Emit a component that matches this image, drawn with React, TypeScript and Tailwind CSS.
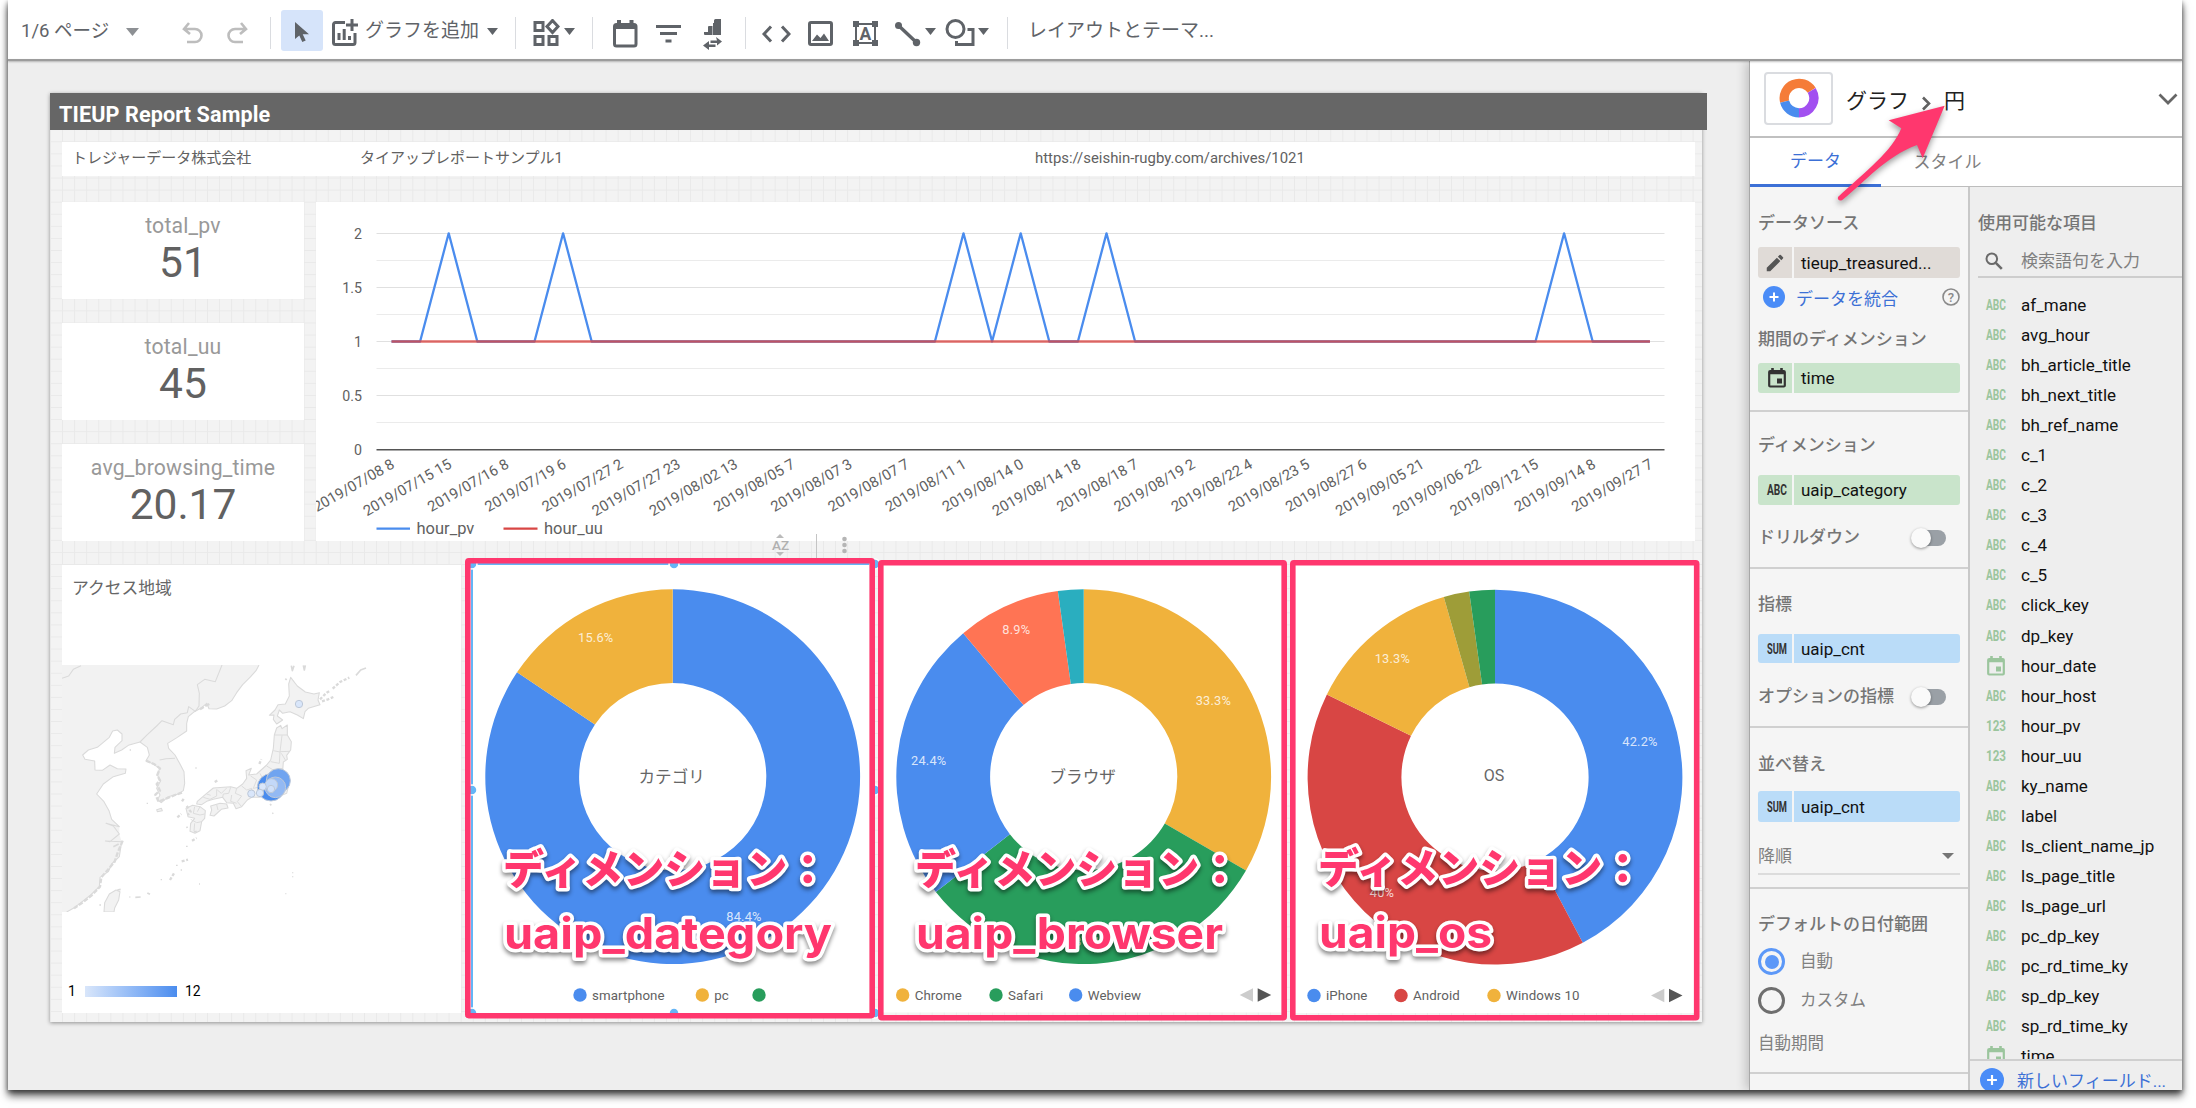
import React from 'react';

const PINK = '#ff376e';
const BLUE = '#4a8cee';
const YELLOW = '#f0b23c';
const GREEN = '#289d5c';
const RED = '#d84644';

/* ---------- toolbar ---------- */

const Caret = ({ className = '' }: { className?: string }) => (
  <svg className={'shrink-0 ' + className} width="11" height="7" viewBox="0 0 11 7">
    <path d="M0 0h11L5.5 7z" fill="currentColor" />
  </svg>
);

const Divider = ({ className = '' }: { className?: string }) => (
  <div className={'h-8 w-px shrink-0 bg-[#dadce0] ' + className} />
);

type IconProps = { w: number; h: number; className?: string; children: React.ReactNode };
const Icon = ({ w, h, className = '', children }: IconProps) => (
  <svg
    className={'shrink-0 ' + className}
    width={w}
    height={h}
    viewBox={`0 0 ${w} ${h}`}
    fill="none"
    stroke="currentColor"
    strokeWidth="3"
  >
    {children}
  </svg>
);

function Toolbar() {
  return (
    <div className="flex h-[59px] items-center bg-white text-[#5f6368]">
      <span className="ml-[13px] mt-0.5 w-[92px] whitespace-nowrap text-[18.5px] leading-6">1/6 ページ</span>
      <svg className="ml-[13px] mt-1 shrink-0 text-[#8d9094]" width="13" height="8" viewBox="0 0 13 8">
        <path d="M0 0h13L6.500 8z" fill="currentColor" />
      </svg>
      <Icon w={22} h={22} className="ml-[43px] mt-1.5 text-[#bdbdbd]">
        <path d="M7 1 2 7l6 5M2 7h11a6.500 6.500 0 0 1 0 13H5" strokeWidth="2.600" />
      </Icon>
      <Icon w={22} h={22} className="ml-[22px] mt-1.5 text-[#bdbdbd]">
        <path d="m15 1 5 6-6 5M20 7H9a6.500 6.500 0 0 0 0 13h8" strokeWidth="2.600" />
      </Icon>
      <Divider className="ml-[22px] mt-1.5" />
      <div className="ml-[10px] mt-0.5 flex h-[41px] w-[42px] shrink-0 items-center justify-center rounded-[3px] bg-[#d6e4fa]">
        <svg width="14" height="20" viewBox="0 0 14 20" className="mt-0.5">
          <path d="M0 0v17l4.300-3.500 3 6.500 3.400-1.500-3-6.300H14z" fill="currentColor" />
        </svg>
      </div>
      <Icon w={28} h={28} className="ml-[8px] mt-1.5">
        <path d="M14 3.500H4.500a2 2 0 0 0-2 2v18a2 2 0 0 0 2 2H22a2 2 0 0 0 2-2V14M21 0v12M15 6h12" />
        <path d="M8 21v-7M13.200 21V10M18.500 21v-4" />
      </Icon>
      <span className="ml-[6px] mt-0.5 w-[118px] whitespace-nowrap text-[19px] leading-6">グラフを追加</span>
      <Caret className="ml-[4px] mt-1" />
      <Divider className="ml-[17px] mt-1.5" />
      <Icon w={27} h={28} className="ml-[17px] mt-1.5">
        <path d="M2 3.500h8v8H2zM2 17.500h8v8H2zM16 17.500h8v8h-8zM19.500 1.500l5.500 6-5.500 6-5.500-6z" />
      </Icon>
      <Caret className="ml-[4px] mt-1" />
      <Divider className="ml-[17px] mt-1.5" />
      <Icon w={25} h={28} className="ml-[20px] mt-2">
        <rect x="1.500" y="4.500" width="21.500" height="21.500" rx="2" />
        <path d="M1.500 7h21.500M6 0v5M18.500 0v5" strokeWidth="4" />
      </Icon>
      <svg className="ml-[18px] mt-2 shrink-0" width="25" height="18" viewBox="0 0 25 18">
        <path d="M0 0h25v3H0zM4 7h17v3H4zM9.500 14.500h6v3h-6z" fill="currentColor" />
      </svg>
      <svg className="ml-[22px] mt-2.5 shrink-0" width="20" height="31" viewBox="0 0 20 31" fill="currentColor">
        <path d="M1 13h4V8a1 1 0 0 1 1-1h3.500v9H2a1 1 0 0 1-1-1zM11 1.500a1.500 1.500 0 0 1 1.500-1.500H18v16h-7zM10 7V4h3v12h-3z" />
        <path d="M13 18l6 4.500-5 4V24H7.500v-2.500H14zM6 22l-6 4.500L6 31v-3h6.500v-2.500H6z" />
      </svg>
      <Divider className="ml-[22px] mt-1.5" />
      <Icon w={29} h={18} className="ml-[16px] mt-2">
        <path d="M9 1.500 2 9l7 7.500M20 1.500 27 9l-7 7.500" />
      </Icon>
      <Icon w={25} h={25} className="ml-[17px] mt-2">
        <rect x="1.500" y="1.500" width="22" height="22" rx="1.500" />
        <path d="m4 20 5-6.500 3.500 3.500 3.500-4.500 5 7.500z" fill="currentColor" stroke="none" />
      </Icon>
      <svg className="ml-[19.500px] mt-2 shrink-0" width="25" height="25" viewBox="0 0 25 25">
        <rect x="3" y="3" width="19" height="19" fill="none" stroke="currentColor" strokeWidth="2" />
        <path d="M0 0h6v6H0zM19 0h6v6h-6zM0 19h6v6H0zM19 19h6v6h-6z" fill="currentColor" />
        <text x="12.500" y="19" textAnchor="middle" fontSize="17.500" fontWeight="700" fill="currentColor">
          A
        </text>
      </svg>
      <Icon w={27} h={26} className="ml-[16px] mt-2">
        <path d="M4.500 4.500 22.500 21.500" strokeWidth="3.400" />
        <circle cx="4.500" cy="4.500" r="3.500" fill="currentColor" stroke="none" />
        <circle cx="22.500" cy="21.500" r="3.700" fill="currentColor" stroke="none" />
      </Icon>
      <Caret className="ml-[4px] mt-1" />
      <Icon w={31} h={28} className="ml-[9px] mt-1.5">
        <circle cx="10.500" cy="10" r="8.500" />
        <path d="M22.500 10.500H28v15H11.500V22" />
      </Icon>
      <Caret className="ml-[2.500px] mt-1" />
      <Divider className="ml-[18px] mt-1.5" />
      <span className="ml-[20px] mt-0.5 whitespace-nowrap text-[19px] leading-6">レイアウトとテーマ...</span>
    </div>
  );
}

/* ---------- report ---------- */

function Score({ name, value }: { name: string; value: string }) {
  return (
    <div className="flex h-[97px] w-[242px] flex-col items-center bg-white pt-[11px]">
      <span className="h-[26px] text-[21.200px] leading-[25px] tracking-[0.2px] text-[#999]">{name}</span>
      <span className="text-[42.500px] leading-[48px] text-[#616161]">{value}</span>
    </div>
  );
}

const dates = [
  '2019/07/08 8', '2019/07/15 15', '2019/07/16 8', '2019/07/19 6', '2019/07/27 2', '2019/07/27 23',
  '2019/08/02 13', '2019/08/05 7', '2019/08/07 3', '2019/08/07 7', '2019/08/11 1', '2019/08/14 0',
  '2019/08/14 18', '2019/08/18 7', '2019/08/19 2', '2019/08/22 4', '2019/08/23 5', '2019/08/27 6',
  '2019/09/05 21', '2019/09/06 22', '2019/09/12 15', '2019/09/14 8', '2019/09/27 7',
];
const peaks = [2, 6, 20, 22, 25, 41];

function LineChart() {
  const px = (k: number) => 391 + 28.6 * k;
  const pts = Array.from({ length: 45 }, (_, k) => `${px(k)},${peaks.includes(k) ? 233.3 : 341.5}`).join(' ');
  return (
    <svg className="ml-[11.5px] block bg-white" width="1379.5" height="339" viewBox="315.5 202 1379.5 339">
      {[0, 1, 2, 3, 4, 5, 6, 7].map((i) => (
        <rect key={i} x="376" width="1288" y={Math.round(233 + 27.05 * i)} height="1" fill={i % 2 ? '#ebebeb' : '#e0e0e0'} />
      ))}
      <rect x="376" y="449" width="1288" height="1.500" fill="#555" />
      <g fontSize="14.200" fill="#616161" textAnchor="end">
        {['2', '1.5', '1', '0.5', '0'].map((t, i) => (
          <text key={t} x="361.500" y={238.5 + 54.1 * i}>{t}</text>
        ))}
        {dates.map((d, i) => (
          <text key={i} transform={`translate(${395 + 57.2 * i} 467) rotate(-30)`} fontSize="14.800">
            {d}
          </text>
        ))}
      </g>
      <polyline points={pts} fill="none" stroke={BLUE} strokeWidth="2.300" strokeLinejoin="round" />
      <path d="M391 341.500H1649.500" stroke="#d84644" strokeOpacity="0.800" strokeWidth="2.600" />
      <path d="M376 528.700h33.500" stroke={BLUE} strokeWidth="2.300" />
      <path d="M503 528.700h34" stroke={RED} strokeWidth="2.300" />
      <g fontSize="16.500" fill="#616161">
        <text x="416" y="534">hour_pv</text>
        <text x="543.500" y="534">hour_uu</text>
      </g>
    </svg>
  );
}

function RegionMap() {
  return (
    <svg className="block" width="399" height="247" viewBox="6 15 1197 741">
      <g fill="#f2f2f2" stroke="#dadada" strokeWidth="3.200" strokeLinejoin="round">
        <path
          stroke="none"
          d="M6 15H597L588 32 572 50 548 74 530 98 515 122 494 138 470 147 447 146 440 130 425 143 403 155 385 170 380 190V213L352 232 323 250 326 265 345 285 360 312 372 335 374 370 370 392 352 403 325 410 304 428 292 420 300 405 290 385 302 362 292 345 299 325 281 313 258 302 268 285 262 262 240 246 205 256 185 270 163 280 165 262 186 242 186 222 172 210 158 213 148 232 112 262 85 270 68 285 75 298 104 303 105 330 127 331 150 315 172 326 198 327 196 340 160 350 130 372 110 402 132 425 147 452 155 478 178 500 178 522 185 545 178 590 155 612 145 635 120 652 118 680 92 705 60 730 40 745 20 756H6z"
        />
        <path
          fill="none"
          d="M597 15 588 32 572 50 548 74 530 98 515 122 494 138 470 147 447 146 440 130 425 143 403 155 385 170 380 190V213L352 232 323 250 326 265 345 285 360 312 372 335 374 370 370 392 352 403 325 410 304 428 292 420 300 405 290 385 302 362 292 345 299 325 281 313 258 302 268 285 262 262 240 246 205 256 185 270 163 280 165 262 186 242 186 222 172 210 158 213 148 232 112 262 85 270 68 285 75 298 104 303 105 330 127 331 150 315 172 326 198 327 196 340 160 350 130 372 110 402 132 425 147 452 155 478 178 500 138 490 160 498 178 522 150 545 136 543 185 545 178 590 155 612 145 635 120 652 118 680 92 705 60 730 40 745 20 756"
        />
        <path fill="none" d="M6 55 26 48 40 28 63 17M486 15 466 65 434 58 412 74 418 100 417 138 406 154 386 140 382 158 362 162 344 178 340 194 306 182 290 198 262 224 240 246M299 300 318 296 345 295" />
        <path fill="none" strokeWidth="7" d="M188 542 184 552 174 575 164 605 150 622 124 652 120 680 96 705 70 726 42 745M448 132 436 138 420 148M258 302 282 312 300 325 292 345 300 362 290 372 300 392 286 404 296 425 320 415 345 405 366 398" strokeDasharray="14 5" />
        <path d="M132 756 134 728 148 702 168 690 180 695 176 720 164 744 162 756z" />
        <path d="M290 449 304 445 307 452 292 455z" />
        {/* Hokkaido */}
        <path d="M692 52 712 78 736 96 762 102 778 98 774 120 780 134 745 145 735 155 730 176 712 165 690 155 668 160 658 150 652 168 668 180 650 192 640 178 642 165 628 166 645 150 654 134 676 132 688 108 686 72z" />
        {/* Honshu */}
        <path d="M650 204 662 196 666 206 682 195 682 225 694 245 692 270 680 286 682 298 670 306 668 332 690 360 680 400 650 412 632 420 618 400 600 412 575 412 562 420 545 440 528 446 520 430 500 428 488 412 460 418 440 424 425 434 410 432 412 424 440 400 460 384 512 380 530 385 548 372 560 355 558 332 574 325 566 345 590 342 620 315 632 300 640 265 643 225z" />
        <path d="M452 438 480 430 500 432 504 444 484 448 462 468 450 466 455 450z" />
        <path d="M378 445 398 436 420 440 436 452 434 475 425 485 420 512 405 520 390 514 392 490 404 475 384 470z" />
        <path fill="none" strokeWidth="2.800" d="M643 225 682 225M666 226 660 275 690 274M640 272 660 276 658 310 632 305M664 280 676 300M620 318 640 330 668 325M600 340 610 360 640 350M572 348 590 360 580 385 606 380M545 378 560 390 575 385 580 405M530 385 526 400 545 408 532 425 545 440M512 382 506 400 490 402 488 412M500 384 484 400 472 390M470 388 470 408 450 418 430 412M440 402 452 406M515 405 512 424 530 430M404 440 400 460 420 465 434 462M420 440 412 455M392 478 410 488 425 485M404 490 402 514M470 434 474 450" />
        <path fill="none" strokeWidth="7" strokeDasharray="9 5" d="M780 118 800 98 810 92M818 86 840 66 868 53M786 124 804 118 820 111M380 438 392 455 384 464M365 604 384 599M330 660 342 640M396 542 410 534M352 472 364 462M366 424 374 412M598 312 604 298M464 366 472 362" />
        <path fill="none" strokeWidth="5" d="M888 46 902 30 918 24M694 17 697 32 702 17M730 16 733 30 736 16M676 56 680 60M226 712 242 711M262 699 270 703M172 690 182 688M160 560 176 552M380 500 382 504M402 516 410 514M630 432 634 436" />
        <path fill="none" strokeWidth="4" d="M406 324h4M302 659h4M417 672h3M698 637v3M698 649v3M676 701h3M637 458l3 3M362 630h4M348 616h5M378 559h5M118 735h5M209 270h4M260 430h4M208 711h3" />
      </g>
      <g stroke="#bdc8d8" strokeWidth="3">
        <circle cx="717" cy="132" r="11" fill="#d9e6fa" />
        <circle cx="633" cy="382" r="41" fill={BLUE} />
        <circle cx="655" cy="362" r="36" fill="#70a4f0" />
        <circle cx="646" cy="382" r="31" fill="#93b9f3" />
        <circle cx="634" cy="375" r="19" fill="#c3d8f8" />
        <circle cx="633" cy="387" r="11" fill="#d0e0f9" />
        <circle cx="608" cy="380" r="11" fill="#d9e6fa" />
        <circle cx="600" cy="399" r="11" fill="#d9e6fa" />
        <circle cx="574" cy="401" r="11" fill="#d9e6fa" />
      </g>
    </svg>
  );
}

type Slice = { v: number; c: string };
type Mark = { t: string; x: number; y: number };
type Leg = { t: string; c: string; x: number };
type DonutProps = {
  x: number;
  y: number;
  w: number;
  h: number;
  cx: number;
  slices: Slice[];
  marks: Mark[];
  legend: Leg[];
  title: string;
  titleSize: number;
  pager?: number;
  selected?: boolean;
  note: { x: number; y1: number; y2: number; t: string; len: number };
  className: string;
};

function ring(cx: number, cy: number, a0: number, a1: number) {
  const R = 187.4;
  const r = 93.6;
  const p = (rad: number, a: number) =>
    `${cx + rad * Math.sin(a * 2 * Math.PI)} ${cy - rad * Math.cos(a * 2 * Math.PI)}`;
  const big = a1 - a0 > 0.5 ? 1 : 0;
  return `M${p(R, a0)}A${R} ${R} 0 ${big} 1 ${p(R, a1)}L${p(r, a1)}A${r} ${r} 0 ${big} 0 ${p(r, a0)}Z`;
}

function Donut(p: DonutProps) {
  const total = p.slices.reduce((s, o) => s + o.v, 0);
  let acc = 0;
  const cy = 776.7;
  return (
    <svg
      className={'block shrink-0 overflow-visible ' + p.className}
      width={p.w}
      height={p.h}
      viewBox={`${p.x} ${p.y} ${p.w} ${p.h}`}
    >
      <rect x={p.x + 3} y={p.y + 3} width={p.w - 6} height={p.selected ? p.h - 6 : 1012.5 - p.y - 3} fill="#fff" />
      {p.slices.map((s, i) => {
        const a0 = acc / total;
        acc += s.v;
        return <path key={i} d={ring(p.cx, cy, a0, acc / total)} fill={s.c} />;
      })}
      <g fontSize="12.800" fill="#fff" fillOpacity="0.800" textAnchor="middle" letterSpacing="0.200">
        {p.marks.map((m) => (
          <text key={m.t} x={m.x} y={m.y + 4.5}>{m.t}</text>
        ))}
      </g>
      <text x={p.cx - 1} y={p.titleSize > 16.5 ? 782.5 : 780} fontSize={p.titleSize} textAnchor="middle" fill="#666">
        {p.title}
      </text>
      <g fontSize="13.300" fill="#616161" letterSpacing="0.100">
        {p.legend.map((l, i) => (
          <g key={i}>
            <circle cx={l.x} cy="995" r="6.700" fill={l.c} />
            <text x={l.x + 12} y="999.500">{l.t}</text>
          </g>
        ))}
      </g>
      {p.pager && (
        <g>
          <path d={`M${p.pager} 995l13.300-6.700v13.400z`} fill="#ccc" />
          <path d={`M${p.pager + 31.5} 995l-13.500-6.700v13.400z`} fill="#555" />
        </g>
      )}
      {p.selected && (
        <g fill="#64b5f6">
          <path d="M471.500 564H874M472 564V1013" stroke="#64b5f6" strokeWidth="2" />
          {[472, 674, 875].map((x) => [564, 790, 1013].map((y) =>
            x === 674 && y === 790 ? null : <circle key={x + '-' + y} cx={x} cy={y} r="5" stroke="#fff" strokeWidth="1.500" />
          ))}
        </g>
      )}
      <rect x={p.x + 2.8} y={p.y + 2.8} width={p.w - 5.6} height={p.h - 5.6} rx="1" fill="none" stroke={PINK} strokeWidth="5.600" />
      <g
        className="[filter:drop-shadow(0_3px_2px_rgba(0,0,0,0.45))]"
        fill={PINK}
        stroke="#fff"
        strokeWidth="7"
        strokeLinejoin="round"
        paintOrder="stroke"
        fontWeight="700"
      >
        <text x={p.note.x} y={p.note.y1 - 1} fontSize="41" fontWeight="900">ディメンション：</text>
        <text
          x={p.note.x + 1}
          y={p.note.y2}
          fontSize="43.500"
          textLength={p.note.len}
          lengthAdjust="spacingAndGlyphs"
          className="font-[Inter]"
        >
          {p.note.t}
        </text>
      </g>
    </svg>
  );
}

function Report() {
  return (
    <div className="ml-[42px] mt-[32px] h-[929px] w-[1652px] bg-[#f3f3f3] bg-[linear-gradient(to_right,#e9e9e9_1px,transparent_1px),linear-gradient(to_bottom,#e9e9e9_1px,transparent_1px)] bg-[size:12.08px_12.08px] shadow-[0_1px_4px_rgba(0,0,0,0.4)]">
      <div className="flex h-[37px] w-[1657px] items-center bg-[#666] pl-[9px] pt-[7px] text-[21.600px] font-bold leading-7 tracking-[0.1px] text-white">
        TIEUP Report Sample
      </div>
      <div className="ml-3 mt-3 flex h-[34px] w-[1633px] items-center bg-white pb-[2px] text-[15px] leading-6 text-[#616161]">
        <span className="w-[298px] pl-[10px]">トレジャーデータ株式会社</span>
        <span className="w-[675px]">タイアップレポートサンプル1</span>
        <span className="text-[14.900px]">https://seishin-rugby.com/archives/1021</span>
      </div>
      <div className="ml-3 mt-[26px] flex">
        <div className="flex flex-col gap-6">
          <Score name="total_pv" value="51" />
          <Score name="total_uu" value="45" />
          <Score name="avg_browsing_time" value="20.17" />
        </div>
        <LineChart />
      </div>
      <div className="relative ml-3 flex">
        <svg className="absolute left-[704px] top-[-8px]" width="90" height="26" viewBox="766 533 90 26">
          <path d="M776 538l4-4 4 4zM776 552l4 4 4-4z" fill="#bbb" />
          <text x="780.500" y="550" textAnchor="middle" fontSize="13.500" fontWeight="500" fill="#b0b0b0">AZ</text>
          <path d="M816.500 534V558" stroke="#c4c4c4" />
          <g fill="#b5b5b5">
            <circle cx="844.500" cy="539" r="2.300" />
            <circle cx="844.500" cy="545" r="2.300" />
            <circle cx="844.500" cy="551" r="2.300" />
          </g>
        </svg>
        <div className="mt-6 flex h-[448px] w-[399px] shrink-0 flex-col bg-white">
          <div className="h-[100px] pl-[10px] pt-[11px] text-[16.800px] leading-6 text-[#666]">アクセス地域</div>
          <RegionMap />
          <div className="mt-[69px] flex items-center gap-2 pl-[6px] text-[14px] leading-5 text-black">
            <span className="w-[9px]">1</span>
            <div className="h-[11px] w-[92px] bg-linear-to-r from-[#d9e6fa] to-[#4a8cee]" />
            <span>12</span>
          </div>
        </div>
        <Donut
          className="ml-[4px] mt-[17px]"
          x={465} y={558} w={410} h={460.5} cx={672.7} selected
          slices={[{ v: 84.4, c: BLUE }, { v: 15.6, c: YELLOW }]}
          marks={[{ t: '15.6%', x: 595.7, y: 637.5 }, { t: '84.4%', x: 744, y: 916.5 }]}
          legend={[{ t: 'smartphone', c: BLUE, x: 580 }, { t: 'pc', c: YELLOW, x: 702.3 }, { t: '', c: GREEN, x: 759 }]}
          title="カテゴリ" titleSize={16.6}
          note={{ x: 503, y1: 884.5, y2: 949.3, t: 'uaip_dategory', len: 328 }}
        />
        <Donut
          className="ml-[3px] mt-[19px]"
          x={878} y={560} w={409} h={460.5} cx={1083.7} pager={1239.7}
          slices={[
            { v: 33.3, c: YELLOW }, { v: 31.1, c: GREEN }, { v: 24.4, c: BLUE },
            { v: 8.9, c: '#ff7454' }, { v: 2.2, c: '#2aaebf' },
          ]}
          marks={[
            { t: '33.3%', x: 1213.3, y: 700 }, { t: '24.4%', x: 928.7, y: 760.7 },
            { t: '8.9%', x: 1016.3, y: 629 }, { t: '31.1%', x: 1092, y: 941 },
          ]}
          legend={[{ t: 'Chrome', c: YELLOW, x: 902.7 }, { t: 'Safari', c: GREEN, x: 996 }, { t: 'Webview', c: BLUE, x: 1075.7 }]}
          title="ブラウザ" titleSize={16.6}
          note={{ x: 915, y1: 884.5, y2: 949.3, t: 'uaip_browser', len: 307 }}
        />
        <Donut
          className="ml-[3px] mt-[18.5px]"
          x={1290} y={559.5} w={409.5} h={460.5} cx={1495} pager={1651}
          slices={[
            { v: 42.2, c: BLUE }, { v: 40, c: RED }, { v: 13.3, c: YELLOW },
            { v: 2.2, c: '#9e9d38' }, { v: 2.2, c: GREEN },
          ]}
          marks={[{ t: '42.2%', x: 1640, y: 740.5 }, { t: '13.3%', x: 1392.3, y: 657.7 }, { t: '40%', x: 1382, y: 891.5 }]}
          legend={[{ t: 'iPhone', c: BLUE, x: 1314 }, { t: 'Android', c: RED, x: 1401 }, { t: 'Windows 10', c: YELLOW, x: 1494 }]}
          title="OS" titleSize={16}
          note={{ x: 1318, y1: 883, y2: 947.5, t: 'uaip_os', len: 173 }}
        />
      </div>
    </div>
  );
}

/* ---------- properties panel ---------- */

const TypeTag = ({ t, className = '' }: { t: string; className?: string }) => (
  <svg className={'shrink-0 overflow-visible ' + className} width="22" height="12" viewBox="0 0 22 12">
    <text x="1" y="11" fontSize="14" fontWeight="700" fill="currentColor" textLength="20" lengthAdjust="spacingAndGlyphs">
      {t}
    </text>
  </svg>
);

const CalIcon = ({ className = '' }: { className?: string }) => (
  <svg className={'shrink-0 ' + className} width="20" height="20" viewBox="0 0 20 20" fill="none" stroke="currentColor">
    <rect x="2.200" y="3" width="15.600" height="15.500" rx="1" strokeWidth="2.200" />
    <path d="M2 5h16M5.500 0v4M14.500 0v4" strokeWidth="2.600" />
    <rect x="10" y="10.500" width="5" height="5" fill="currentColor" stroke="none" />
  </svg>
);

const Chip = ({ className, icon, children }: { className: string; icon: React.ReactNode; children: React.ReactNode }) => (
  <div className={'flex w-[202px] shrink-0 overflow-hidden rounded-[3px] text-[17px] leading-6 ' + className}>
    <div className="flex w-[34px] items-center justify-center">{icon}</div>
    <div className="w-[2px] bg-[#f5f5f5]" />
    <div className="flex items-center pl-[7px] text-[#111]">{children}</div>
  </div>
);

const Head = ({ className, children }: { className: string; children: React.ReactNode }) => (
  <div className={'flex shrink-0 items-center whitespace-nowrap text-[17px] font-medium leading-6 text-[#757575] ' + className}>
    {children}
  </div>
);

const SwitchRow = ({ className, children }: { className: string; children: React.ReactNode }) => (
  <div className={'flex shrink-0 items-center justify-between pr-[22px] text-[17px] font-medium leading-6 text-[#757575] ' + className}>
    <span className="whitespace-nowrap">{children}</span>
    <div className="mt-0.5 flex h-4 w-[31px] items-center rounded-full bg-[#9aa0a6]">
      <div className="-ml-1 size-5 shrink-0 rounded-full bg-[#fafafa] shadow-[0_1px_3px_rgba(0,0,0,0.4)]" />
    </div>
  </div>
);

const Plus = ({ className }: { className: string }) => (
  <svg className={'shrink-0 ' + className} viewBox="0 0 22 22">
    <circle cx="11" cy="11" r="11" fill="#4a8cf7" />
    <path d="M11 6.500v9M6.500 11h9" stroke="#fff" strokeWidth="2" />
  </svg>
);

const fields: [string, string][] = [
  ['ABC', 'af_mane'], ['ABC', 'avg_hour'], ['ABC', 'bh_article_title'], ['ABC', 'bh_next_title'],
  ['ABC', 'bh_ref_name'], ['ABC', 'c_1'], ['ABC', 'c_2'], ['ABC', 'c_3'], ['ABC', 'c_4'], ['ABC', 'c_5'],
  ['ABC', 'click_key'], ['ABC', 'dp_key'], ['date', 'hour_date'], ['ABC', 'hour_host'], ['123', 'hour_pv'],
  ['123', 'hour_uu'], ['ABC', 'ky_name'], ['ABC', 'label'], ['ABC', 'ls_client_name_jp'],
  ['ABC', 'ls_page_title'], ['ABC', 'ls_page_url'], ['ABC', 'pc_dp_key'], ['ABC', 'pc_rd_time_ky'],
  ['ABC', 'sp_dp_key'], ['ABC', 'sp_rd_time_ky'], ['date', 'time'],
];

function Panel() {
  return (
    <div className="relative z-10 flex h-[1029px] w-[433px] shrink-0 flex-col border-l border-[#a8a8a8] bg-white shadow-[-3px_0_10px_rgba(0,0,0,0.2)]">
      <div className="flex h-[77px] shrink-0 items-center border-b-2 border-[#c0c0c0] pb-px">
        <div className="ml-[14px] flex h-[53px] w-[69px] items-center justify-center rounded border-2 border-[#dadce0]">
          <svg width="40" height="40" viewBox="-20 -20 40 40" fill="none" strokeWidth="9.300">
            <path d="M-14.400 3.700A14.900 14.900 0 0 1 12.700-7.700" stroke="#f57c38" />
            <path d="M12.700-7.700A14.900 14.900 0 0 1 0 14.900" stroke="#a250f0" />
            <path d="M0 14.900A14.900 14.900 0 0 1-14.400 3.700" stroke="#4a8cee" />
          </svg>
        </div>
        <span className="ml-[13px] mt-1.5 text-[21px] leading-7 text-[#212121]">グラフ</span>
        <svg className="ml-[12px] mt-2.5" width="11" height="15" viewBox="0 0 11 15">
          <path d="m2 1.500 6 6-6 6" fill="none" stroke="#616161" strokeWidth="2.600" />
        </svg>
        <span className="ml-[12px] mt-1.5 text-[21px] leading-7 text-[#212121]">円</span>
        <svg className="ml-auto mr-[4px] mt-0.5" width="20" height="13" viewBox="0 0 20 13">
          <path d="m1.500 1.500 8.500 8.500 8.500-8.500" fill="none" stroke="#666" strokeWidth="2.700" />
        </svg>
      </div>
      <div className="flex h-[49px] shrink-0 border-b border-[#bdbdbd] text-[17px] leading-6">
        <div className="-mb-px flex w-[131px] items-center justify-center border-b-[3px] border-[#3c70d6] text-[#3c70d6]">データ</div>
        <div className="flex w-[133px] items-center justify-center text-[#808080]">スタイル</div>
      </div>
      <div className="flex min-h-0 flex-1">
        <div className="flex w-[218px] shrink-0 flex-col overflow-hidden bg-[#f5f5f5]">
          <div className="flex h-[225px] shrink-0 flex-col border-b-2 border-[#d0d0d0] pl-[8px]">
            <Head className="h-[60px] pt-[11px]">データソース</Head>
            <Chip
              className="h-[31px] bg-[#e0dbd7]"
              icon={
                <svg width="22" height="22" viewBox="0 0 24 24" fill="#555">
                  <path d="M3 17.250V21h3.750L17.810 9.940l-3.750-3.750zM20.710 7.040a1 1 0 0 0 0-1.410l-2.340-2.340a1 1 0 0 0-1.410 0l-1.830 1.830 3.750 3.750z" />
                </svg>
              }
            >
              tieup_treasured...
            </Chip>
            <div className="flex h-[38px] shrink-0 items-center text-[17px] leading-6 text-[#3c70d6]">
              <Plus className="ml-[5px] size-[22px]" />
              <span className="ml-[11px] mt-1">データを統合</span>
              <svg className="ml-auto mr-[8px]" width="18" height="18" viewBox="0 0 18 18">
                <circle cx="9" cy="9" r="8" fill="none" stroke="#8a8a8a" strokeWidth="1.600" />
                <text x="9" y="13.500" textAnchor="middle" fontSize="13" fontWeight="500" fill="#8a8a8a">?</text>
              </svg>
            </div>
            <Head className="h-[47px] pb-[2px]">期間のディメンション</Head>
            <Chip className="h-[30px] bg-[#c9e4cb]" icon={<CalIcon className="ml-1 text-[#333]" />}>time</Chip>
          </div>
          <div className="flex h-[157px] shrink-0 flex-col border-b-2 border-[#d0d0d0] pl-[8px]">
            <Head className="h-[63px] pt-[3px]">ディメンション</Head>
            <Chip className="h-[30px] bg-[#c9e4cb]" icon={<TypeTag t="ABC" className="ml-1 text-[#333]" />}>uaip_category</Chip>
            <SwitchRow className="h-[63px]">ドリルダウン</SwitchRow>
          </div>
          <div className="flex h-[159px] shrink-0 flex-col border-b-2 border-[#d0d0d0] pl-[8px]">
            <Head className="h-[65px] pt-[5px]">指標</Head>
            <Chip className="h-[29px] bg-[#badcf8]" icon={<TypeTag t="SUM" className="ml-1 text-[#333]" />}>uaip_cnt</Chip>
            <SwitchRow className="h-[64px] pt-px">オプションの指標</SwitchRow>
          </div>
          <div className="flex h-[161px] shrink-0 flex-col border-b-2 border-[#d0d0d0] pl-[8px]">
            <Head className="h-[63px] pt-[8px]">並べ替え</Head>
            <Chip className="h-[31px] bg-[#badcf8]" icon={<TypeTag t="SUM" className="ml-1 text-[#333]" />}>uaip_cnt</Chip>
            <div className="flex h-[53px] w-[202px] items-center border-b-2 border-[#dcdcdc] pt-[17px] text-[17px] leading-6 text-[#808080]">
              降順
              <svg className="ml-auto mr-[6px]" width="12" height="6" viewBox="0 0 12 6">
                <path d="M0 0h12L6 6z" fill="#757575" />
              </svg>
            </div>
          </div>
          <div className="flex h-[185px] shrink-0 flex-col border-b-2 border-[#d0d0d0] pl-[8px] text-[16.500px] leading-6 text-[#808080]">
            <Head className="h-[53px] pt-[17px]">デフォルトの日付範囲</Head>
            <div className="flex h-[39px] items-center">
              <div className="flex size-[27px] items-center justify-center rounded-full border-[3px] border-[#5c98f8]">
                <div className="size-[14px] rounded-full bg-[#5c98f8]" />
              </div>
              <span className="ml-[15px]">自動</span>
            </div>
            <div className="flex h-[39px] items-center">
              <div className="size-[27px] rounded-full border-[3px] border-[#6e6e6e]" />
              <span className="ml-[15px]">カスタム</span>
            </div>
            <div className="flex h-[48px] items-center">自動期間</div>
          </div>
        </div>
        <div className="flex min-w-0 flex-1 flex-col overflow-hidden border-l-2 border-[#c8c8c8] bg-[#eee]">
          <Head className="h-[50px] pl-[8px] pt-[21px]">使用可能な項目</Head>
          <div className="ml-[8px] flex h-[41px] shrink-0 items-center border-b-2 border-[#cdcdcd] pb-px pl-[7px] pt-[10px] text-[17px] leading-6 text-[#808080]">
            <svg width="18" height="18" viewBox="0 0 18 18" fill="none" stroke="#6a6a6a" strokeWidth="2">
              <circle cx="6.800" cy="6.800" r="5.300" />
              <path d="m10.800 10.800 6 6" strokeWidth="2.600" />
            </svg>
            <span className="ml-[18px] whitespace-nowrap">検索語句を入力</span>
          </div>
          <div className="flex min-h-0 flex-1 flex-col overflow-hidden pt-[12px] text-[17px] leading-6 text-[#111]">
            {fields.map(([type, name]) => (
              <div key={name} className="flex h-[30.06px] shrink-0 items-center pl-[15px]">
                {type === 'date' ? (
                  <CalIcon className="mr-[1px] ml-px text-[#9bc59d]" />
                ) : (
                  <TypeTag t={type} className="text-[#9bc59d]" />
                )}
                <span className="ml-[14px]">{name}</span>
              </div>
            ))}
          </div>
          <div className="flex h-[31px] shrink-0 items-start overflow-hidden border-t-2 border-[#cfcfcf] pl-[10px] pt-[7px] text-[17px] leading-6 text-[#3c70d6]">
            <Plus className="size-6" />
            <span className="ml-[13px] mt-[1px] whitespace-nowrap">新しいフィールド...</span>
          </div>
        </div>
      </div>
      <svg
        className="absolute left-[82px] top-[38px] [filter:drop-shadow(0_3px_3px_rgba(0,0,0,0.4))]"
        width="120"
        height="110"
        viewBox="400 182 360 330"
      >
        <path d="M738 202 570 246 608 270C580 340 500 400 418 476Q415 488 430 486C500 430 560 355 655 320L672 360Z" fill={PINK} />
      </svg>
    </div>
  );
}

export default function App() {
  return (
    <div className="h-[1108px] w-[2196px] overflow-hidden bg-white pl-2 [font-family:Roboto,'Noto_Sans_CJK_JP',sans-serif]">
      <div className="flex h-[1090px] w-[2174px] flex-col bg-[#eee] shadow-[0_6px_8px_rgba(0,0,0,0.6),0_2px_5px_rgba(0,0,0,0.5)]">
        <Toolbar />
        <div className="relative z-20 h-[2px] shrink-0 bg-[#9c9c9c] shadow-[0_1px_2px_rgba(0,0,0,0.25)]" />
        <div className="flex min-h-0 flex-1 overflow-hidden">
          <div className="w-[1741px] shrink-0">
            <Report />
          </div>
          <Panel />
        </div>
      </div>
    </div>
  );
}
